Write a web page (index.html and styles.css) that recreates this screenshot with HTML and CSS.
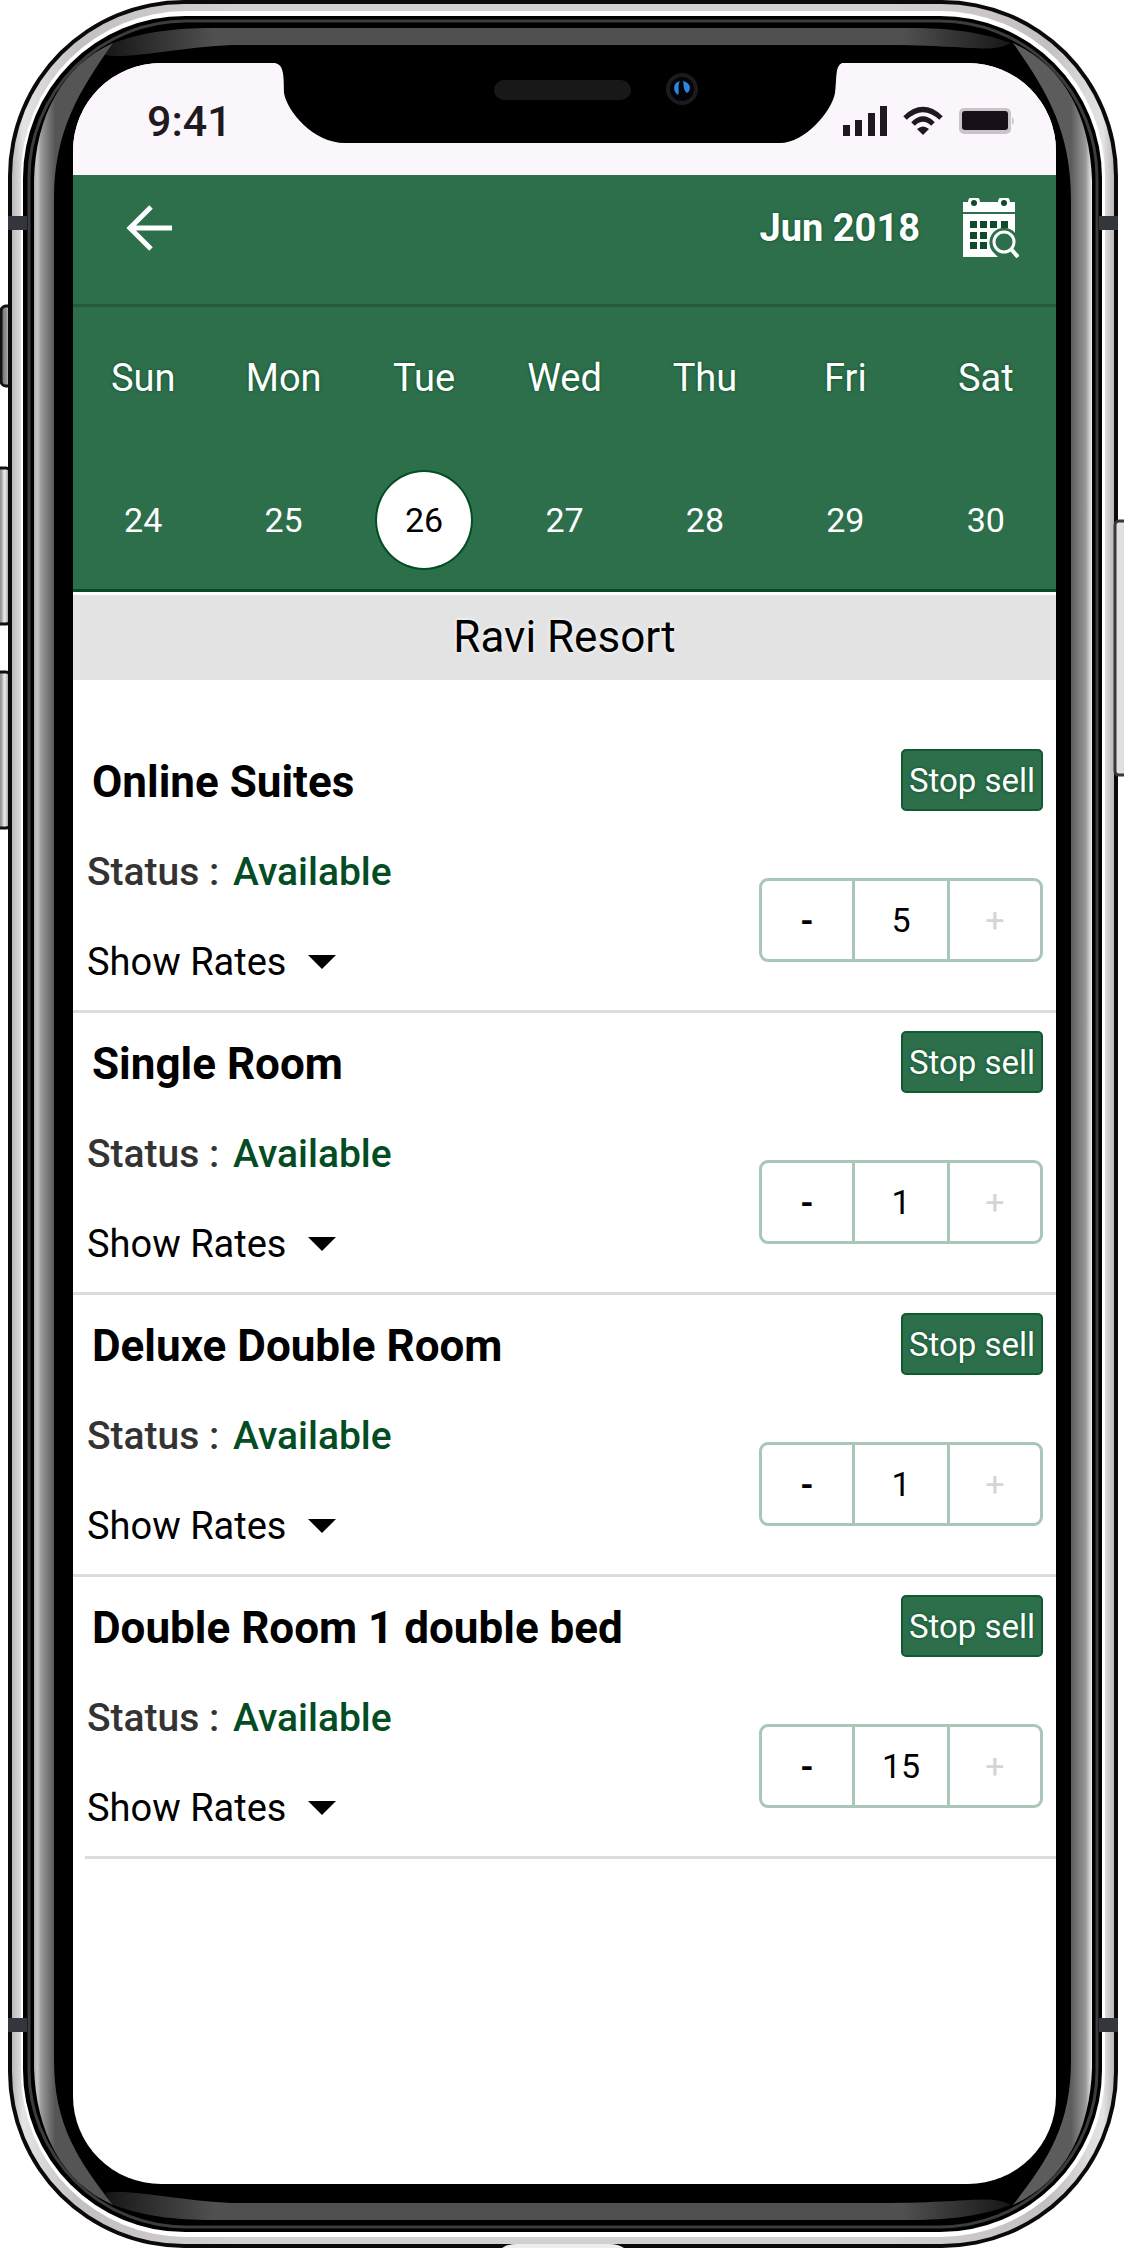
FILE: index.html
```html
<!DOCTYPE html>
<html lang="en">
<head>
<meta charset="utf-8">
<meta name="viewport" content="width=device-width, initial-scale=1">
<title>Ravi Resort – Room inventory</title>
<link rel="stylesheet" href="styles.css">
</head>
<body>
<div class="phone">
  <svg class="frame" viewBox="0 0 1124 2248" preserveAspectRatio="none" aria-hidden="true">
    <defs>
      <linearGradient id="steel" x1="0" x2="1" y1="0" y2="0">
        <stop offset="0" stop-color="#bcb8ba"/><stop offset=".01" stop-color="#e6e3e5"/>
        <stop offset=".06" stop-color="#c4c0c2"/><stop offset=".2" stop-color="#d4d0d2"/>
        <stop offset=".8" stop-color="#d4d0d2"/><stop offset=".94" stop-color="#c4c0c2"/>
        <stop offset=".99" stop-color="#e6e3e5"/><stop offset="1" stop-color="#bcb8ba"/>
      </linearGradient>
      <linearGradient id="glossLeft" gradientUnits="userSpaceOnUse" x1="34" x2="55" y1="0" y2="0">
        <stop offset="0" stop-color="#aaa"/><stop offset=".15" stop-color="#c8c8c8"/><stop offset=".35" stop-color="#999"/><stop offset="1" stop-color="#555"/>
      </linearGradient>
      <linearGradient id="glossRight" gradientUnits="userSpaceOnUse" x1="1071" x2="1092" y1="0" y2="0">
        <stop offset="0" stop-color="#5c5c5c"/><stop offset=".7" stop-color="#999"/><stop offset="1" stop-color="#eee"/>
      </linearGradient>
      <linearGradient id="glossTop" x1="0" x2="1" y1="0" y2="0">
        <stop offset="0" stop-color="#161616"/><stop offset=".12" stop-color="#505050"/><stop offset=".88" stop-color="#505050"/><stop offset="1" stop-color="#161616"/>
      </linearGradient>
      <linearGradient id="key" x1="0" x2="1" y1="0" y2="0">
        <stop offset="0" stop-color="#666"/><stop offset=".5" stop-color="#999"/><stop offset=".7" stop-color="#eee"/><stop offset="1" stop-color="#888"/>
      </linearGradient>
    </defs>
    <g fill="url(#key)" stroke="#111" stroke-width="3">
      <rect x="1" y="306" width="12" height="80" rx="5"/>
      <rect x="-8" y="468" width="18" height="156" rx="4"/>
      <rect x="-8" y="672" width="18" height="156" rx="4"/>
    </g>
    <rect x="8" y="0" width="1110" height="2248" rx="176" ry="176" fill="#0a0a0a"/>
    <rect x="12" y="4" width="1102" height="2240" rx="172" ry="172" fill="url(#steel)"/>
    <rect x="21" y="11" width="1084" height="2226" rx="165" ry="165" fill="#fff"/>
    <rect x="23" y="16" width="1079" height="2216" rx="162" ry="162" fill="#000"/>
    <rect x="29" y="21" width="1068" height="2206" rx="157" ry="157" fill="none" stroke="#3c3c3c" stroke-width="3"/>
    <path d="M113 43C150 30 180 28 220 28H904C944 28 974 30 1011 43C990 54 974 45 880 45H240C190 45 130 60 105 55Z" fill="url(#glossTop)"/>
    <path d="M113 2205C150 2218 180 2220 220 2220H904C944 2220 974 2218 1011 2205C990 2194 974 2203 880 2203H240C190 2203 130 2188 105 2193Z" fill="url(#glossTop)"/>
    <path d="M34 180C36 116 62 66 113 43C80 90 54 130 54 200V2060C54 2125 78 2160 113 2205C62 2182 36 2132 34 2068Z" fill="url(#glossLeft)"/>
    <path d="M1092 180C1090 116 1064 66 1013 43C1046 90 1071 130 1071 200V2060C1071 2125 1048 2160 1013 2205C1064 2182 1090 2132 1092 2068Z" fill="url(#glossRight)"/>
    <g fill="#33363d">
      <rect x="8" y="216" width="19" height="14"/><rect x="1099" y="216" width="19" height="14"/>
      <rect x="8" y="2018" width="19" height="14"/><rect x="1099" y="2018" width="19" height="14"/>
    </g>
    <rect x="1115" y="521" width="18" height="254" rx="4" fill="#e2dfe0" stroke="#3a3638" stroke-width="3"/>
    <path d="M502 2248Q508 2244 516 2244H610Q618 2244 624 2248Z" fill="#eee"/>
  </svg>

  <div class="screen">
    <div class="status-bar">
      <span class="clock">9:41</span>
      <svg class="notch" viewBox="0 0 567 80" aria-hidden="true">
        <path d="M0 0C8 2 9 9 9 30C12 48 38 80 70 80H505C530 80 557 48 560 30C562 14 560 3 567 0Z" fill="#000"/>
        <rect x="219" y="17" width="137" height="20" rx="10" fill="#181818"/>
        <circle cx="407" cy="26" r="16" fill="#1b1b1b"/><circle cx="407" cy="26" r="12" fill="#02040c"/>
        <path d="M405 18C397 20 398 29 403 32C405 28 402 23 405 18ZM408 18C417 20 416 28 412 30C408 27 409 22 408 18Z" fill="#2f86dc"/>
      </svg>
      <div class="indicators">
        <svg width="46" height="32" viewBox="0 0 46 32" aria-hidden="true"><path d="M1 20h7v11H1zM13 15h7v16h-7zM26 8h7v23h-7zM38 1h7v30h-7z" fill="#201820"/></svg>
        <svg width="40" height="30" viewBox="0 0 40 30" aria-hidden="true"><g fill="none" stroke="#201820" stroke-width="5"><path d="M2 12Q20-5 38 12"/><path d="M10 18Q20 8 30 18"/></g><path d="M14 23Q20 18 26 23L20 29Z" fill="#201820"/></svg>
        <svg width="58" height="28" viewBox="0 0 58 28" aria-hidden="true"><rect x="1" y="1" width="52" height="26" rx="5" fill="#c9c4c9"/><rect x="4" y="4" width="46" height="19" rx="3" fill="#181018"/><path d="M54 10q4 4 0 8z" fill="#c9c4c9"/></svg>
      </div>
    </div>

    <header class="app-bar">
      <button class="icon-button" aria-label="Back">
        <svg width="48" height="48" viewBox="0 0 48 48" aria-hidden="true"><path d="M26 3L5 24L26 45M5 24H47" fill="none" stroke="#fff" stroke-width="5"/></svg>
      </button>
      <h1 class="month">Jun 2018</h1>
      <button class="icon-button" aria-label="Pick a date">
        <svg width="56" height="60" viewBox="0 0 56 60" aria-hidden="true">
          <path d="M0 4H5A6 6 0 0 1 17 4H35A6 6 0 0 1 47 4H52V14H0Z" fill="#fff"/>
          <path d="M0 16H52V59H0Z" fill="#fff"/>
          <g fill="#0f4a2b"><circle cx="11" cy="5" r="3"/><circle cx="41" cy="5" r="3"/>
          <path d="M7 23h7v7H7zM17 23h7v7h-7zM27 23h7v7h-7zM38 23h7v7h-7zM7 34h7v7H7zM17 34h7v7h-7zM7 44h7v7H7zM17 44h7v7h-7z"/></g>
          <path d="M56 34V60H36L30 54A14 14 0 0 1 52 35Z" fill="#2d6e4b"/>
          <circle cx="41" cy="44" r="14" fill="#2d6e4b"/>
          <circle cx="41" cy="44" r="10" fill="none" stroke="#fff" stroke-width="3"/>
          <path d="M48 51L55 59" stroke="#fff" stroke-width="4"/>
        </svg>
      </button>
    </header>

    <nav class="week" aria-label="Week">
      <span class="weekday">Sun</span><span class="weekday">Mon</span><span class="weekday">Tue</span><span class="weekday">Wed</span><span class="weekday">Thu</span><span class="weekday">Fri</span><span class="weekday">Sat</span>
      <button class="date">24</button><button class="date">25</button><button class="date selected" aria-current="date">26</button><button class="date">27</button><button class="date">28</button><button class="date">29</button><button class="date">30</button>
    </nav>

    <h2 class="property">Ravi Resort</h2>

    <main class="rooms">
      <section class="room">
        <div class="details">
          <h3 class="name">Online Suites</h3>
          <p class="state">Status : <strong class="available">Available</strong></p>
          <button class="rates">Show Rates <span class="caret"></span></button>
        </div>
        <div class="actions">
          <button class="stop">Stop sell</button>
          <div class="stepper">
            <button class="minus" aria-label="Fewer rooms">-</button>
            <input class="count" type="text" value="5" aria-label="Online Suites rooms">
            <button class="plus" aria-label="More rooms" disabled>+</button>
          </div>
        </div>
      </section>
      <section class="room">
        <div class="details">
          <h3 class="name">Single Room</h3>
          <p class="state">Status : <strong class="available">Available</strong></p>
          <button class="rates">Show Rates <span class="caret"></span></button>
        </div>
        <div class="actions">
          <button class="stop">Stop sell</button>
          <div class="stepper">
            <button class="minus" aria-label="Fewer rooms">-</button>
            <input class="count" type="text" value="1" aria-label="Single Room rooms">
            <button class="plus" aria-label="More rooms" disabled>+</button>
          </div>
        </div>
      </section>
      <section class="room">
        <div class="details">
          <h3 class="name">Deluxe Double Room</h3>
          <p class="state">Status : <strong class="available">Available</strong></p>
          <button class="rates">Show Rates <span class="caret"></span></button>
        </div>
        <div class="actions">
          <button class="stop">Stop sell</button>
          <div class="stepper">
            <button class="minus" aria-label="Fewer rooms">-</button>
            <input class="count" type="text" value="1" aria-label="Deluxe Double Room rooms">
            <button class="plus" aria-label="More rooms" disabled>+</button>
          </div>
        </div>
      </section>
      <section class="room">
        <div class="details">
          <h3 class="name">Double Room 1 double bed</h3>
          <p class="state">Status : <strong class="available">Available</strong></p>
          <button class="rates">Show Rates <span class="caret"></span></button>
        </div>
        <div class="actions">
          <button class="stop">Stop sell</button>
          <div class="stepper">
            <button class="minus" aria-label="Fewer rooms">-</button>
            <input class="count" type="text" value="15" aria-label="Double Room 1 double bed rooms">
            <button class="plus" aria-label="More rooms" disabled>+</button>
          </div>
        </div>
      </section>
    </main>
  </div>
</div>
</body>
</html>
```
FILE: styles.css
```css
:root {
  --green: #2d6e4b;
  --green-deep: #044d24;
  --line: #a9c7b7;
}

* { box-sizing: border-box; }

body {
  margin: 0;
  background: #fff;
  color: #000;
  font-family: Roboto, "Liberation Sans", sans-serif;
  font-size: 38px;
}

h1, h2, h3, p { margin: 0; }

button, input {
  margin: 0;
  padding: 0;
  border: 0;
  background: none;
  color: inherit;
  font: inherit;
}

svg { display: block; }

/* Device */
.phone {
  position: relative;
  display: flex;
  min-height: 100vh;
  padding: 63px 68px 64px 73px;
}

.frame {
  position: absolute;
  inset: 0;
  width: 100%;
  height: 100%;
}

.screen {
  position: relative;
  flex: 1;
  min-width: 0;
  overflow: hidden;
  border-radius: 88px;
  background: #fff;
}

/* System status bar */
.status-bar {
  display: grid;
  grid-template-columns: 202fr 567px 214fr;
  height: 112px;
  background: #fbf6fb;
}

.clock {
  padding: 34px 0 0 74px;
  color: #1e1a20;
  font-size: 43px;
  font-weight: 500;
  line-height: 48px;
}

.notch { width: 567px; height: 80px; }

.indicators {
  display: flex;
  align-items: center;
  gap: 15px;
  padding-top: 3px;
}

/* App bar */
.app-bar {
  display: flex;
  align-items: center;
  height: 129px;
  padding: 0 37px 24px 52px;
  background: var(--green);
  color: #fff;
}

.icon-button { flex: none; }

.month {
  flex: 1;
  padding-right: 43px;
  font-size: 38px;
  font-weight: 700;
  text-align: right;
  text-shadow: 0 0 3px var(--green-deep);
}

/* Week strip */
.week {
  display: grid;
  grid-template-columns: repeat(7, 1fr);
  justify-items: center;
  row-gap: 70px;
  padding: 47px 0 21px;
  border-top: 3px solid #255a3e;
  border-bottom: 3px solid var(--green-deep);
  background: var(--green);
  color: #fff;
  text-shadow: 0 0 3px var(--green-deep);
}

.weekday { line-height: 48px; }

.date {
  width: 94px;
  height: 96px;
  border-radius: 50%;
  font-size: 34px;
}

.date.selected {
  background: #fff;
  box-shadow: 0 0 0 2px var(--green-deep);
  color: #000;
  text-shadow: none;
}

.property {
  border-top: 3px solid #fff;
  background: #e3e3e3;
  font-size: 44px;
  font-weight: 400;
  line-height: 85px;
  text-align: center;
  text-shadow: 0 0 4px #fff;
}

/* Room list */
.rooms { padding-top: 51px; }

.room {
  display: flex;
  justify-content: space-between;
  height: 282px;
  border-bottom: 3px solid #dcdcdc;
}

.room:last-child { margin-left: 12px; }
.room:last-child .details { margin-left: -12px; }

.details {
  display: flex;
  flex-direction: column;
  align-items: flex-start;
  padding: 6px 0 0 14px;
  line-height: 90px;
}

.name {
  padding-left: 5px;
  font-size: 44px;
  font-weight: 700;
}

.state {
  color: #333;
  font-size: 39px;
  font-weight: 500;
}

.available {
  margin-left: 4px;
  color: var(--green-deep);
  font-weight: 500;
}

.rates {
  display: flex;
  align-items: center;
  gap: 22px;
}

.caret {
  border: 14px solid transparent;
  border-top-color: #000;
  border-bottom: 0;
}

.actions {
  display: flex;
  flex: none;
  flex-direction: column;
  align-items: flex-end;
  gap: 67px;
  padding: 18px 13px 0 0;
}

.stop {
  width: 142px;
  height: 62px;
  border: 2px solid #0f5a30;
  border-radius: 5px;
  background: var(--green);
  color: #fff;
  font-size: 33px;
  text-shadow: 0 0 3px var(--green-deep);
  white-space: nowrap;
}

.stepper {
  display: grid;
  grid-template-columns: 90px 1fr 90px;
  width: 284px;
  height: 84px;
  border: 3px solid var(--line);
  border-radius: 9px;
  font-size: 34px;
}

.minus { font-weight: 700; }

.count {
  min-width: 0;
  border: solid var(--line);
  border-width: 0 3px;
  text-align: center;
}

.plus { color: #d5d5d5; }
```
